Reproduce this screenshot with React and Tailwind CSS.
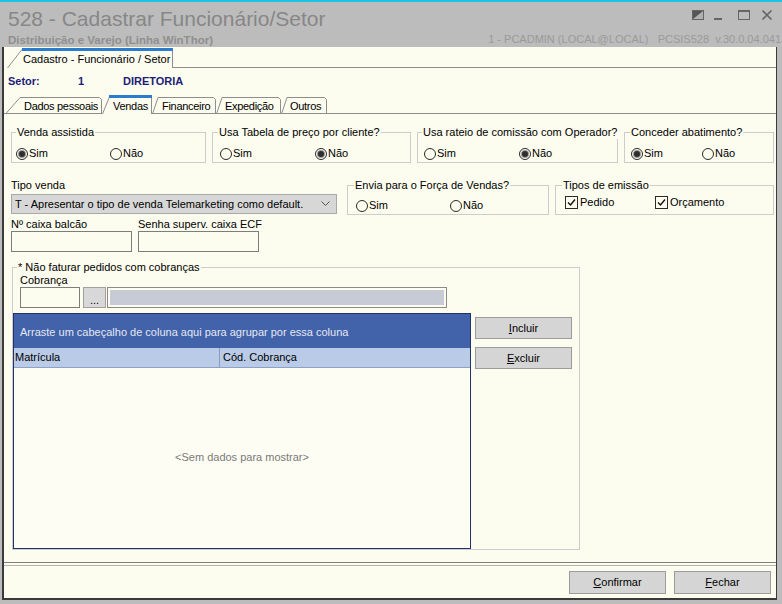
import React from 'react'

const TabShape = ({ w, h, slant, active, baseline }) => (
    <svg className="absolute inset-0" width={w} height={h}>
        <path
            d={`M0.5 ${h} L${slant} 0.5 L${w - 2.5} 0.5 L${w - 0.5} 2.5 L${w - 0.5} ${h}`}
            fill="#fcfcef"
            stroke="#8e8e8e"
        />
        {active && <rect x={slant - 1} y="0" width={w - slant + 1} height="3" fill="#2a7ccc" />}
        {baseline && <line x1="0" y1={h - 0.5} x2={w} y2={h - 0.5} stroke="#8e8e8e" />}
    </svg>
)

const Tab = ({ label, w, h, slant, size, pad, active }) => (
    <div className={`relative shrink-0 ${size}`}>
        <TabShape w={w} h={h} slant={slant} active={active} baseline={!active} />
        <div className={`relative h-full flex items-center whitespace-nowrap tracking-[-0.3px] ${pad} ${active ? 'pt-[3px]' : 'pt-[1px]'}`}>{label}</div>
    </div>
)

const Radio = ({ checked, label, cell }) => (
    <span className={`flex items-center h-[13px] ${cell}`}>
        <span className="w-[12px] h-[12px] rounded-full border border-[#2b2b2b] bg-[#fcfcef] flex items-center justify-center">
            {checked && <span className="w-[6px] h-[6px] rounded-full bg-[#2e2e2e] ring-1 ring-[#9a9a9a]" />}
        </span>
        <span className="ml-[1px]">{label}</span>
    </span>
)

const Check = ({ label, cell }) => (
    <span className={`flex items-center h-[13px] ${cell}`}>
        <span className="w-[13px] h-[13px] border border-[#2b2b2b] bg-[#fcfcef] flex items-center justify-center">
            <svg width="11" height="11" viewBox="0 0 11 11">
                <path d="M2 5.5 L4.5 8 L9 2.5" fill="none" stroke="#111" strokeWidth="1.4" />
            </svg>
        </span>
        <span className="ml-[2px]">{label}</span>
    </span>
)

// the legend ignores the box padding, so inner spacing goes on the children
const GroupBox = ({ title, className, legend, children }) => (
    <fieldset className={`border border-[#cdcdcd] min-w-0 shrink-0 ${className}`}>
        <legend className={`px-[1px] leading-[13px] whitespace-nowrap ${legend}`}>{title}</legend>
        {children}
    </fieldset>
)

const WinButton = ({ hot, rest, size }) => (
    <button className={`bg-[#d5d5d5] border border-[#9c9c9c] flex items-center justify-center ${size}`}>
        <span><span className="underline">{hot}</span>{rest}</span>
    </button>
)

const TitleBar = () => (
    <div className="h-[45px] flex justify-between">
        <div className="pl-[8px] pt-[5px]">
            <div className="text-[21px] leading-[24px] text-[#878787]">528 - Cadastrar Funcionário/Setor</div>
            <div className="mt-[3px] text-[11.5px] leading-[13px] font-bold text-[#8f8f8f]">Distribuição e Varejo (Linha WinThor)</div>
        </div>
        <div className="flex flex-col items-end">
            <svg className="mt-[7px] mr-[9px]" width="81" height="12" viewBox="0 0 81 12">
                {/* restaurar / minimizar / maximizar / fechar */}
                <rect x="0.5" y="1.5" width="11" height="9" fill="#b0b0b0" stroke="#666" />
                <polygon points="1,2 11,2 1,10" fill="#555" />
                <rect x="22" y="9" width="8" height="2" fill="#666" />
                <rect x="46.5" y="1.5" width="11" height="9" fill="none" stroke="#666" />
                <rect x="46" y="1" width="12" height="2" fill="#666" />
                <path d="M70.5 1.5 L79.5 10.5 M79.5 1.5 L70.5 10.5" stroke="#666" strokeWidth="1.6" />
            </svg>
            <div className="mt-[12px] pr-[1px] text-[11px] leading-[13px] text-[#9a9a9a] whitespace-pre">
                1 - PCADMIN (LOCAL@LOCAL)   PCSIS528  v.30.0.04.041
            </div>
        </div>
    </div>
)

const App = () => {
    return (
        <div className="w-[782px] h-[604px] bg-[#bcbcbc] overflow-hidden font-['Liberation_Sans',Arial,sans-serif] text-[11px] leading-[13px] text-black">
            <div className="h-[2px] bg-[#1cc4e4]" />
            <TitleBar />

            <div className="ml-[2px] w-[775px] h-[553px] border-l-2 border-b-2 border-r border-[#3a3a3a] bg-[#fcfcef] flex flex-col">
                {/* aba externa */}
                <div className="h-[21px] flex items-end">
                    <div className="w-[3px]" />
                    <div className="relative shrink-0 w-[166px] h-[20px]">
                        <svg className="absolute inset-0" width="166" height="20">
                            <path d="M0.5 20 L15 1.5 L165.5 1.5 L165.5 20" fill="#fcfcef" stroke="#8e8e8e" />
                            <rect x="15" y="0" width="151" height="3" fill="#2a7ccc" />
                        </svg>
                        <div className="relative h-full flex items-center whitespace-nowrap pl-[16px] pt-[3px]">Cadastro - Funcionário / Setor</div>
                    </div>
                    <div className="flex-1 border-b border-[#8e8e8e]" />
                </div>

                <div className="h-[27px] flex items-center pl-[4px] font-bold text-[#1c1c78]">
                    <span className="w-[70px]">Setor:</span>
                    <span className="w-[45px]">1</span>
                    <span>DIRETORIA</span>
                </div>

                {/* abas internas */}
                <div className="h-[19px] flex items-end">
                    <div className="w-[1px] h-full border-b border-[#8e8e8e]" />
                    <Tab label="Dados pessoais" w={97} h={17} slant={15} size="w-[97px] h-[17px]" pad="pl-[19px]" />
                    <Tab label="Vendas" w={50} h={19} slant={8} size="w-[50px] h-[19px]" pad="pl-[11px]" active />
                    <Tab label="Financeiro" w={64} h={17} slant={6} size="w-[64px] h-[17px]" pad="pl-[10px]" />
                    <Tab label="Expedição" w={65} h={17} slant={6} size="w-[65px] h-[17px]" pad="pl-[9px]" />
                    <Tab label="Outros" w={46} h={17} slant={6} size="w-[46px] h-[17px]" pad="pl-[9px]" />
                    <div className="flex-1 h-full border-b border-[#8e8e8e]" />
                </div>

                <div className="flex-1 flex flex-col">
                    <div className="mt-[12px] ml-[7px] flex gap-[6px]">
                        <GroupBox title="Venda assistida" className="w-[195px] h-[37px]" legend="ml-[4px]">
                            <div className="mt-[8px] pl-[4px] flex">
                                <Radio checked label="Sim" cell="w-[94px]" />
                                <Radio label="Não" />
                            </div>
                        </GroupBox>
                        <GroupBox title="Usa Tabela de preço por cliente?" className="w-[199px] h-[37px]" legend="ml-[5px]">
                            <div className="mt-[8px] pl-[7px] flex">
                                <Radio label="Sim" cell="w-[95px]" />
                                <Radio checked label="Não" />
                            </div>
                        </GroupBox>
                        <GroupBox title="Usa rateio de comissão com Operador?" className="w-[201px] h-[37px]" legend="ml-[4px]">
                            <div className="mt-[8px] pl-[6px] flex">
                                <Radio label="Sim" cell="w-[95px]" />
                                <Radio checked label="Não" />
                            </div>
                        </GroupBox>
                        <GroupBox title="Conceder abatimento?" className="w-[150px] h-[37px]" legend="ml-[5px]">
                            <div className="mt-[8px] pl-[6px] flex">
                                <Radio checked label="Sim" cell="w-[71px]" />
                                <Radio label="Não" />
                            </div>
                        </GroupBox>
                    </div>

                    <div className="mt-[16px] flex items-start">
                        <div className="ml-[7px] w-[336px] shrink-0">
                            <div className="h-[13px]">Tipo venda</div>
                            <div className="mt-[2px] w-[326px] h-[20px] bg-[#d7d7d7] border border-[#a9a9a9] flex items-center justify-between pl-[3px] pr-[6px]">
                                <span>T - Apresentar o tipo de venda Telemarketing como default.</span>
                                <svg width="9" height="6" viewBox="0 0 9 6">
                                    <path d="M0.5 0.5 L4.5 4.5 L8.5 0.5" fill="none" stroke="#555" />
                                </svg>
                            </div>
                            <div className="mt-[4px] flex h-[13px]">
                                <span className="w-[127px]">Nº caixa balcão</span>
                                <span>Senha superv. caixa ECF</span>
                            </div>
                            <div className="flex">
                                <div className="w-[121px] h-[21px] border border-[#7d7d7d] bg-[#fcfcef]" />
                                <div className="ml-[6px] w-[121px] h-[21px] border border-[#7d7d7d] bg-[#fcfcef]" />
                            </div>
                        </div>
                        <GroupBox title="Envia para o Força de Vendas?" className="w-[202px] h-[36px]" legend="ml-[6px]">
                            <div className="mt-[7px] pl-[8px] flex">
                                <Radio label="Sim" cell="w-[94px]" />
                                <Radio label="Não" />
                            </div>
                        </GroupBox>
                        <GroupBox title="Tipos de emissão" className="ml-[6px] w-[219px] h-[36px]" legend="ml-[6px]">
                            <div className="mt-[4px] pl-[9px] flex">
                                <Check label="Pedido" cell="w-[90px]" />
                                <Check label="Orçamento" />
                            </div>
                        </GroupBox>
                    </div>

                    <GroupBox title="* Não faturar pedidos com cobranças" className="mt-[9px] ml-[8px] w-[568px]" legend="ml-[4px]">
                        <div className="pl-[7px] h-[13px]">Cobrança</div>
                        <div className="flex h-[21px]">
                            <div className="ml-[7px] w-[60px] border border-[#7d7d7d] bg-[#fcfcef]" />
                            <button className="ml-[3px] w-[23px] h-[21px] bg-[#d8d8d8] border border-[#a0a0a0] leading-[10px] pt-[4px]">...</button>
                            <div className="ml-[1px] w-[340px] border border-[#8a8a8a] bg-[#fcfcef] p-[2px]">
                                <div className="h-full bg-[#c6cbd6]" />
                            </div>
                        </div>
                        <div className="mt-[5px] flex items-start">
                            <div className="w-[458px] h-[236px] border border-[#22306c] flex flex-col bg-[#fdfdf3]">
                                <div className="h-[34px] bg-[#4262aa] text-[#e4e8f2] flex items-center px-[6px] pt-[2px]">
                                    Arraste um cabeçalho de coluna aqui para agrupar por essa coluna
                                </div>
                                <div className="h-[20px] flex bg-[#b9cbe7] border-b border-[#8ea2c8]">
                                    <div className="w-[206px] border-r border-[#8a9cc2] flex items-center pl-[1px]">Matrícula</div>
                                    <div className="flex items-center pl-[3px]">Cód. Cobrança</div>
                                </div>
                                <div className="flex-1 flex items-center justify-center text-[#7a7a7a] pb-[2px]">
                                    &lt;Sem dados para mostrar&gt;
                                </div>
                            </div>
                            <div className="ml-[4px] pt-[4px] flex flex-col gap-[8px]">
                                <WinButton hot="I" rest="ncluir" size="w-[97px] h-[22px]" />
                                <WinButton hot="E" rest="xcluir" size="w-[97px] h-[22px]" />
                            </div>
                        </div>
                    </GroupBox>
                </div>

                <div className="h-[36px] border-t border-[#7f7f7f]">
                    <div className="mt-[2px] border-t border-[#b4b4b4] pt-[5px] flex justify-end gap-[8px] pr-[5px]">
                        <WinButton hot="C" rest="onfirmar" size="w-[97px] h-[23px]" />
                        <WinButton hot="F" rest="echar" size="w-[97px] h-[23px]" />
                    </div>
                </div>
            </div>
        </div>
    )
}

export default App
